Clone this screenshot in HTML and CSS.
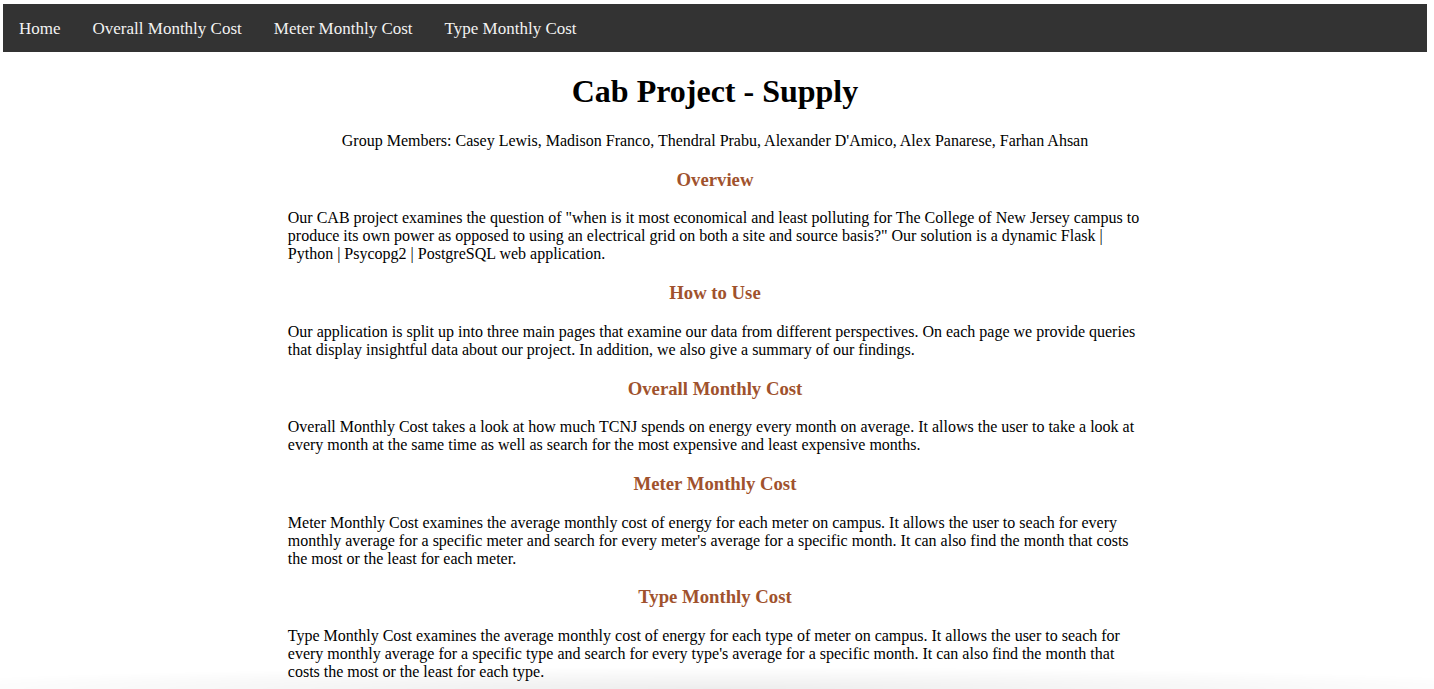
FILE: index.html
```html
<!DOCTYPE html>
<html lang="en">
<head>
<meta charset="utf-8">
<title>Cab Project - Supply</title>
<link rel="stylesheet" href="styles.css">
</head>
<body>
<nav class="topnav">
  <a href="#">Home</a>
  <a href="#">Overall Monthly Cost</a>
  <a href="#">Meter Monthly Cost</a>
  <a href="#">Type Monthly Cost</a>
</nav>
<main class="content">
  <h1 class="title">Cab Project - Supply</h1>
  <p class="members">Group Members: Casey Lewis, Madison Franco, Thendral Prabu, Alexander D'Amico, Alex Panarese, Farhan Ahsan</p>
  <h3 class="section">Overview</h3>
  <p>Our CAB project examines the question of "when is it most economical and least polluting for The College of New Jersey campus to produce its own power as opposed to using an electrical grid on both a site and source basis?" Our solution is a dynamic Flask | Python | Psycopg2 | PostgreSQL web application.</p>
  <h3 class="section">How to Use</h3>
  <p>Our application is split up into three main pages that examine our data from different perspectives. On each page we provide queries that display insightful data about our project. In addition, we also give a summary of our findings.</p>
  <h3 class="section">Overall Monthly Cost</h3>
  <p>Overall Monthly Cost takes a look at how much TCNJ spends on energy every month on average. It allows the user to take a look at every month at the same time as well as search for the most expensive and least expensive months.</p>
  <h3 class="section">Meter Monthly Cost</h3>
  <p>Meter Monthly Cost examines the average monthly cost of energy for each meter on campus. It allows the user to seach for every monthly average for a specific meter and search for every meter's average for a specific month. It can also find the month that costs the most or the least for each meter.</p>
  <h3 class="section">Type Monthly Cost</h3>
  <p>Type Monthly Cost examines the average monthly cost of energy for each type of meter on campus. It allows the user to seach for every monthly average for a specific type and search for every type's average for a specific month. It can also find the month that costs the most or the least for each type.</p>
</main>
<div class="bottom-fade"></div>
</body>
</html>
```
FILE: styles.css
```css
html, body {
  background: #ffffff;
}
body {
  margin: 4px 7px 0 3px;
  font-family: "Liberation Serif", "Times New Roman", serif;
  font-size: 16px;
  color: #000;
}
.topnav {
  display: flex;
  background-color: #333333;
}
.topnav a {
  display: block;
  color: #f2f2f2;
  text-decoration: none;
  padding: 15px 16px 13px;
  font-size: 17px;
  line-height: 20px;
}
.content {
  width: 60%;
  margin: 0 auto;
}
.title {
  text-align: center;
  font-size: 32px;
  margin: 21px 0 22px;
}
.members {
  text-align: center;
}
.section {
  text-align: center;
  color: #a0522d;
  font-size: 18.72px;
  margin: 18.72px 0;
}
.content p {
  margin: 16px 0;
}
.bottom-fade {
  position: fixed;
  left: 0;
  right: 0;
  bottom: 0;
  height: 22px;
  pointer-events: none;
  background: radial-gradient(ellipse 60% 100% at 50% 100%, rgba(0,0,0,0.07), rgba(0,0,0,0) 100%);
}
```
